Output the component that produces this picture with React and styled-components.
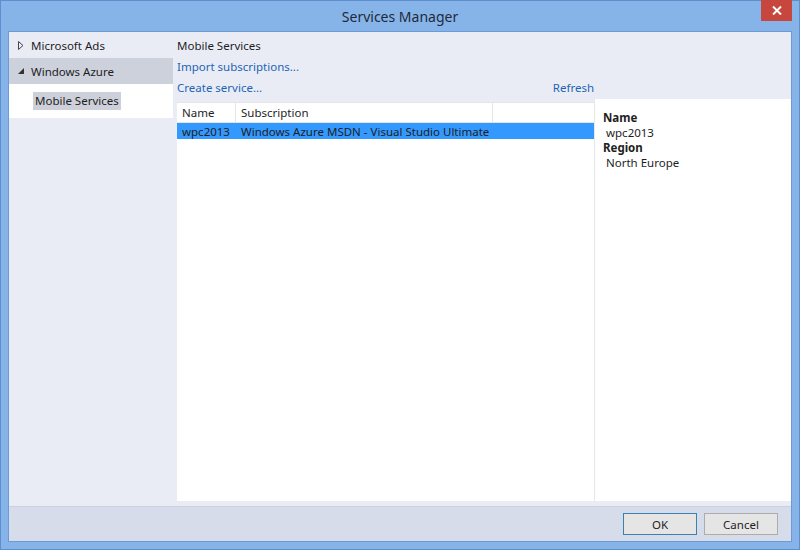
import React from 'react';
import styled, {createGlobalStyle} from 'styled-components';

const Global = createGlobalStyle`
html, body {
margin: 0;
padding: 0;
}
body {
font-family: "Noto Sans", "Segoe UI", sans-serif;
font-size: 11.5px;
color: #1e1e1e;
}
`;

const Frame = styled.div`
width: 800px;
height: 550px;
box-sizing: border-box;
background: #86b4e9;
border: 1px solid #5d8fcf;
display: flex;
flex-direction: column;
`;

const TitleBar = styled.div`
height: 30px;
position: relative;
display: flex;
align-items: center;
justify-content: center;
font-size: 14px;
color: #1f2a3a;
`;

const Close = styled.div`
position: absolute;
top: -1px;
right: 7px;
width: 31px;
height: 21px;
background: #c7463d;
color: #fff;
display: flex;
align-items: center;
justify-content: center;
`;

const Client = styled.div`
flex: 1;
margin: 0 7px 7px 7px;
background: #e9ecf5;
display: flex;
flex-direction: column;
border: 1px solid #6d9ad6;
`;

const Body = styled.div`
flex: 1;
display: flex;
`;

const Nav = styled.div`
width: 164px;
display: flex;
flex-direction: column;
padding-top: 0;
`;

const NavItem = styled.div`
height: 26px;
display: flex;
align-items: center;
padding-left: 8px;
gap: 6px;
background: ${p => p.selected ? '#cdd1dc' : 'transparent'};
`;

const Arrow = styled.span`
width: 8px;
display: inline-flex;
align-items: center;
justify-content: center;
`;

const SubList = styled.div`
background: #fff;
height: 34px;
display: flex;
align-items: center;
padding-left: 24px;
`;

const Tag = styled.span`
background: #cdd0d9;
padding: 1px 2px 2px 2px;
`;

const Main = styled.div`
flex: 1;
display: flex;
flex-direction: column;
padding-left: 4px;
`;

const Heading = styled.div`
margin-top: 3px;
height: 21px;
line-height: 21px;
`;

const LinkRow = styled.div`
width: 417px;
height: 21px;
line-height: 21px;
display: flex;
justify-content: space-between;
`;

const Link = styled.span`
color: #1e64b4;
`;

const Panels = styled.div`
flex: 1;
display: flex;
margin-top: 1px;
margin-bottom: 5px;
`;

const ListBox = styled.div`
width: 417px;
margin-top: 3px;
background: #fff;
display: flex;
flex-direction: column;
`;

const Row = styled.div`
display: grid;
grid-template-columns: 59px 257px 1fr;
height: ${p => p.head ? '21px' : '16px'};
background: ${p => p.selected ? '#3399ff' : '#fff'};
border-bottom: ${p => p.head ? '1px solid #e5e5e5' : 'none'};
border-top: ${p => p.head ? '1px solid #e5e5e5' : 'none'};
box-sizing: border-box;
`;

const Cell = styled.div`
padding-left: 5px;
display: flex;
align-items: center;
white-space: nowrap;
border-right: ${p => p.head ? '1px solid #e5e5e5' : 'none'};
`;

const Details = styled.div`
flex: 1;
background: #fff;
border-left: 1px solid #e7e7e7;
padding: 11px 8px;
display: flex;
flex-direction: column;
line-height: 15px;
`;

const Label = styled.div`
font-weight: bold;
`;

const Value = styled.div`
padding-left: 3px;
`;

const Footer = styled.div`
height: 34px;
background: #d7dcea;
border-top: 1px solid #ccd1de;
display: flex;
align-items: center;
justify-content: flex-end;
gap: 7px;
padding-right: 13px;
`;

const Button = styled.button`
width: 74px;
height: 22px;
font-family: inherit;
font-size: 11.5px;
color: #1e1e1e;
background: #e5e5e5;
border: 1px solid ${p => p.primary ? '#3c7fb1' : '#acacac'};
padding: 0;
`;

const App = () => {
    return (
        <Frame>
            <Global />
            <TitleBar>
                Services Manager
                <Close>
                    <svg width='10' height='9' viewBox='0 0 10 9'>
                        <path d='M1 0.5 L9 8.5 M9 0.5 L1 8.5' stroke='#fff' strokeWidth='2' />
                    </svg>
                </Close>
            </TitleBar>
            <Client>
                <Body>
                    <Nav>
                        <NavItem>
                            <Arrow>
                                <svg width='6' height='9' viewBox='0 0 6 9'>
                                    <path d='M0.5 0.5 L5 4.5 L0.5 8.5 Z' fill='none' stroke='#444' />
                                </svg>
                            </Arrow>
                            Microsoft Ads
                        </NavItem>
                        <NavItem selected>
                            <Arrow>
                                <svg width='7' height='7' viewBox='0 0 7 7'>
                                    <path d='M6 0 L6 6 L0 6 Z' fill='#333' />
                                </svg>
                            </Arrow>
                            Windows Azure
                        </NavItem>
                        <SubList>
                            <Tag>Mobile Services</Tag>
                        </SubList>
                    </Nav>
                    <Main>
                        <Heading>Mobile Services</Heading>
                        <LinkRow><Link>Import subscriptions...</Link></LinkRow>
                        <LinkRow><Link>Create service...</Link><Link>Refresh</Link></LinkRow>
                        <Panels>
                            <ListBox>
                                <Row head>
                                    <Cell head>Name</Cell>
                                    <Cell head>Subscription</Cell>
                                    <Cell />
                                </Row>
                                <Row selected>
                                    <Cell>wpc2013</Cell>
                                    <Cell>Windows Azure MSDN - Visual Studio Ultimate</Cell>
                                    <Cell />
                                </Row>
                            </ListBox>
                            <Details>
                                <Label>Name</Label>
                                <Value>wpc2013</Value>
                                <Label>Region</Label>
                                <Value>North Europe</Value>
                            </Details>
                        </Panels>
                    </Main>
                </Body>
                <Footer>
                    <Button primary>OK</Button>
                    <Button>Cancel</Button>
                </Footer>
            </Client>
        </Frame>
    );
};

export default App;
